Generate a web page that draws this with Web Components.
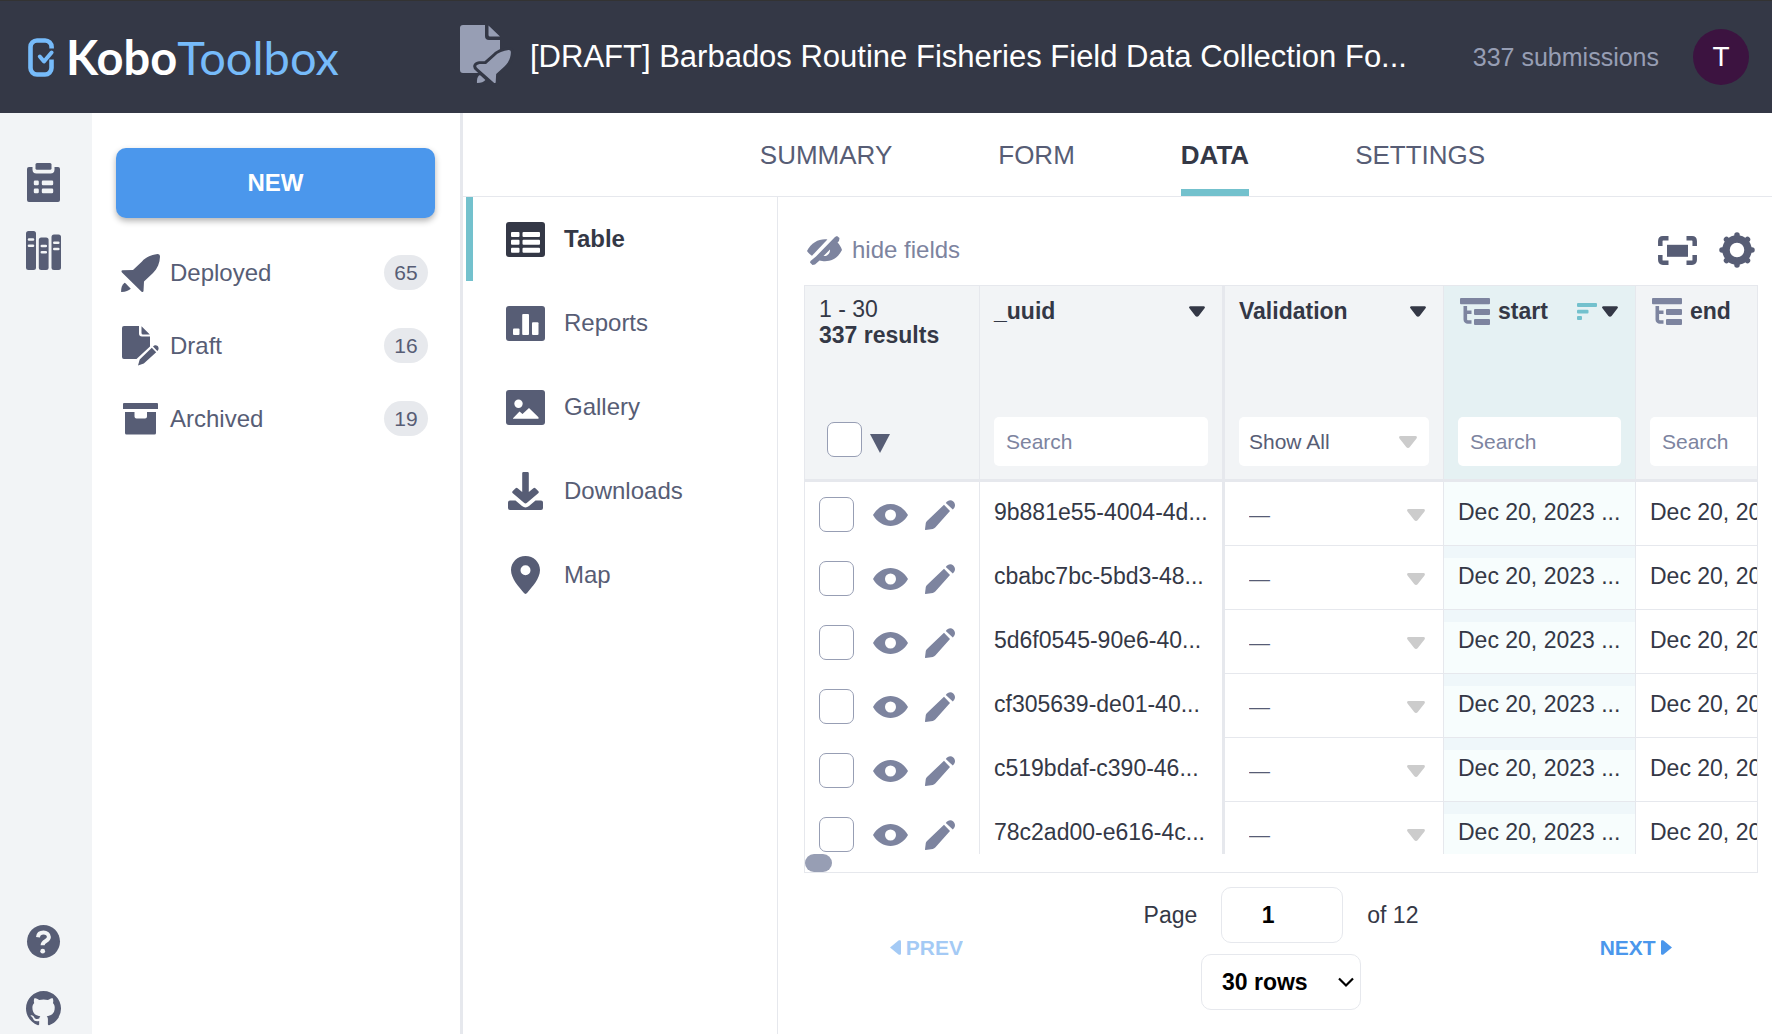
<!DOCTYPE html>
<html lang="en">
<head>
<meta charset="utf-8">
<title>KoboToolbox</title>
<style>
  :root {
    --ink: #343846; --text: #575d75; --mid: #7d849f; --soft: #979eb4;
    --line: #e6e8ed; --panel: #f2f4f6; --blue: #4b97ec; --teal: #73c1cd;
  }
  html, body { margin: 0; height: 100%; }
  body { font-family: "Liberation Sans", Arial, sans-serif; font-size: 24px; color: var(--text); background: #fff; overflow: hidden; }
</style>
</head>
<body>
<kobo-app></kobo-app>
<script>
const ICONS = {
  logo: [26, 39, '<g fill="none" stroke="currentColor" stroke-linecap="round"><path stroke-width="4.6" stroke-linecap="butt" d="M23.6 10.5V9a6.5 6.5 0 0 0-6.5-6.5H9A6.5 6.5 0 0 0 2.5 9v21A6.5 6.5 0 0 0 9 36.5h8a6.5 6.5 0 0 0 6.5-6.5v-8.5"/><path stroke-width="4" stroke-linejoin="round" d="M11.8 18.5l4.2 5 7.6-9"/></g>'],
  deployedDoc: [51, 64, '<path d="M3 0h22v11a4 4 0 0 0 4 4h11v33H3a3 3 0 0 1-3-3V3a3 3 0 0 1 3-3zM28.500 .5L40 11.500H30a1.500 1.500 0 0 1-1.500-1.500z"/><g transform="translate(15 25) scale(.92 .87)" stroke="#343846" stroke-width="6.500" paint-order="stroke" stroke-linejoin="round"><path d="M36.500.1C31 .6 25 3 21 7.500L12 16 5 16.200C1 17 .2 19 3 21.400L20.600 37.700C21.500 38.400 22.400 38 22.500 37L23 27.500 32 19C36.500 14.500 38.800 9 39 2.800 39 1 38 0 36.500.1Z"/><path d="M4.500 29C2.500 31 2 33.500 2.100 37.900 6.500 38 9.500 36.800 11.300 34.600L6 29.200Z"/></g>'],
  rocket: [39, 38, '<path d="M36.500.1C31 .6 25 3 21 7.500L12 16 1.500 16.200C.3 16.400.2 17.600 1 18.400L20.600 37.700C21.500 38.400 22.400 38 22.500 37L23 27.500 32 19C36.500 14.500 38.800 9 39 2.800 39 1 38 0 36.500.1Z"/><path d="M3.500 28.800C1 31 0 33.500.1 37.900 4.500 38 7.500 37 9.800 34.800L4.500 29.200Z"/>'],
  draft: [37, 41, '<path d="M2 1h15v7.500a3 3 0 0 0 3 3h8v10L14.500 34H2a2 2 0 0 1-2-2V3a2 2 0 0 1 2-2zM19.500 1.200L27.800 9.500H21A1.500 1.500 0 0 1 19.500 8z"/><path d="M29.800 22.800l4.400 4.400-12.400 11.300-5.800 2 1.700-6zM31 21.600c2-2.200 4.600-1.200 5.300.4.700 1.600.2 3-1 4z"/>'],
  archive: [35, 32, '<path d="M1 0h33a1 1 0 0 1 1 1v5H0V1a1 1 0 0 1 1-1zM2 9h9.500v4.500a2 2 0 0 0 2 2h8.500a2 2 0 0 0 2-2V9h9v21a1.500 1.500 0 0 1-1.500 1.500h-28A1.500 1.500 0 0 1 2 30z"/>'],
  clipboard: [33, 39, '<path fill-rule="evenodd" d="M2 4h3.500v2.500A4 4 0 0 0 9.500 10.500h14a4 4 0 0 0 4-4V4H31a2 2 0 0 1 2 2v31a2 2 0 0 1-2 2H2a2 2 0 0 1-2-2V6a2 2 0 0 1 2-2zM8 17.500a1.200 1.200 0 0 0-1.200 1.200v2.300A1.200 1.200 0 0 0 8 22.200h2.600a1.200 1.200 0 0 0 1.200-1.200v-2.300a1.200 1.200 0 0 0-1.200-1.200zm8 0a1.200 1.200 0 0 0-1.200 1.200v2.300a1.200 1.200 0 0 0 1.200 1.200h9a1.200 1.200 0 0 0 1.200-1.200v-2.300a1.200 1.200 0 0 0-1.200-1.200zM8 25.600a1.200 1.200 0 0 0-1.200 1.200v2.300A1.200 1.200 0 0 0 8 30.300h2.600a1.200 1.200 0 0 0 1.200-1.200v-2.300a1.200 1.200 0 0 0-1.200-1.200zm8 0a1.200 1.200 0 0 0-1.200 1.200v2.300a1.200 1.200 0 0 0 1.200 1.200h9a1.200 1.200 0 0 0 1.200-1.200v-2.300a1.200 1.200 0 0 0-1.200-1.200z"/><rect x="8.500" y="0" width="16" height="6.800" rx="1.500"/>'],
  books: [35, 39, '<rect width="10" height="39" rx="2.500"/><rect x="12.800" y="6.500" width="9.800" height="32.500" rx="2.500"/><rect x="25.500" y="3.500" width="9.500" height="35.500" rx="2.500"/><g stroke="#f2f4f6" stroke-width="2.600" stroke-linecap="round"><path d="M3 8.500h4M3 14.800h4M15.800 15h4M15.800 21.200h4M28.300 11.800h4M28.300 18h4"/></g>'],
  help: [33, 33, '<circle cx="16.500" cy="16.500" r="16.500"/><path d="M11 12.200c.3-3 2.500-4.600 5.500-4.600s5.400 1.700 5.400 4.500c0 4.300-6.300 3.600-6.300 8.200" fill="none" stroke="#f2f4f6" stroke-width="4"/><circle cx="15.700" cy="26.200" r="2.400" fill="#f2f4f6"/>'],
  github: [35, 35, '<path transform="scale(2.190)" d="M8 0C3.580 0 0 3.580 0 8c0 3.540 2.290 6.530 5.470 7.590.4.070.55-.17.55-.38 0-.19-.01-.82-.01-1.490-2.010.37-2.530-.49-2.690-.94-.09-.23-.48-.94-.82-1.130-.28-.15-.68-.52-.01-.53.63-.01 1.080.58 1.230.82.72 1.210 1.870.87 2.330.66.070-.52.28-.87.51-1.070-1.780-.2-3.640-.89-3.640-3.950 0-.87.31-1.590.82-2.150-.08-.2-.36-1.020.08-2.120 0 0 .67-.21 2.200.82.64-.18 1.320-.27 2-.27s1.360.09 2 .27c1.530-1.040 2.200-.82 2.200-.82.44 1.100.16 1.920.08 2.120.51.56.82 1.270.82 2.150 0 3.070-1.870 3.750-3.650 3.950.29.25.54.73.54 1.480 0 1.070-.01 1.930-.01 2.200 0 .21.15.46.55.38A8.010 8.010 0 0 0 16 8c0-4.420-3.580-8-8-8z"/>'],
  table: [39, 35, '<rect width="39" height="35" rx="3"/><g fill="#fff"><rect x="5" y="10" width="8.500" height="5" rx="1"/><rect x="16.500" y="10" width="17.500" height="5" rx="1"/><rect x="5" y="17.800" width="8.500" height="5" rx="1"/><rect x="16.500" y="17.800" width="17.500" height="5" rx="1"/><rect x="5" y="25.800" width="8.500" height="5" rx="1"/><rect x="16.500" y="25.800" width="17.500" height="5" rx="1"/></g>'],
  reports: [39, 35, '<rect width="39" height="35" rx="3"/><g fill="#fff"><rect x="7" y="22.500" width="6.500" height="6.500" rx="1"/><rect x="16.200" y="8" width="6.800" height="21" rx="1"/><rect x="26" y="16.200" width="6.500" height="12.800" rx="1"/></g>'],
  gallery: [39, 35, '<rect width="39" height="35" rx="3"/><g fill="#fff"><circle cx="12.500" cy="13.800" r="4.200"/><path d="M7 28.200l6.500-6.700 3 2.500 6.500-6 9.500 9.300v1.500H7z"/></g>'],
  download: [39, 38, '<path d="M16.200 1.500A1.200 1.200 0 0 1 17.400 0h4.200A1.200 1.200 0 0 1 22.800 1.500V20l4.600-3.800a1.500 1.500 0 0 1 2 0l2.800 2.800c.8.800.8 1.500 0 2.300L21 30.800a2.200 2.200 0 0 1-3 0L6.800 21.300c-.8-.8-.8-1.500 0-2.300l2.800-2.800a1.500 1.500 0 0 1 2 0L16.200 20z"/><path d="M4 28.500h5.500l6.500 5.500a5.500 5.500 0 0 0 7 0l6.500-5.500H35a2 2 0 0 1 2 2V36a2 2 0 0 1-2 2H4a2 2 0 0 1-2-2v-5.500a2 2 0 0 1 2-2z"/>'],
  map: [39, 38, '<path fill-rule="evenodd" d="M19.500 0C11.500 0 5 6.200 5 14c0 8.500 8 17 12.500 22.500 1.500 1.900 2.500 1.900 4 0C26 31 34 22.500 34 14 34 6.200 27.500 0 19.500 0zm0 9.200a5 5 0 1 1 0 10 5 5 0 0 1 0-10z"/>'],
  hide: [35, 29, '<path d="M0 15C4 7 11 3.200 18 3.200c.8 0 1.600 0 2.400.2L5 19.800C3 18.500 1.500 17 0 15z"/><path fill-rule="evenodd" d="M28 1l2-1 2.500 2-.5 3-1.500 1.500C32.500 8.500 34 11 35 14c-4 8-10 11.200-17 11.200-1.800 0-4-.3-5.500-.7L8 28.500 5.500 29 3 26.500 3.500 25l5.500-4.500zM23 13.500L16.500 20c4 .5 7-2.500 6.500-6.500z"/>'],
  fullscreen: [39, 29, '<path fill="none" stroke="currentColor" stroke-width="4.500" d="M10.500 2.300H5A2.800 2.800 0 0 0 2.300 5v5M28.500 2.300H34A2.800 2.800 0 0 1 36.700 5v5M10.500 26.700H5A2.800 2.800 0 0 1 2.300 24v-5M28.500 26.700H34a2.800 2.800 0 0 0 2.700-2.700v-5"/><rect x="9" y="8.800" width="21" height="12"/>'],
  gear: [36, 36, '<circle cx="18" cy="18" r="11" fill="none" stroke="currentColor" stroke-width="7.500"/><path stroke="currentColor" stroke-width="5.500" stroke-linecap="round" d="M18 4.500v-1.500M18 33v-1.500M4.500 18h-1.500M33 18h-1.500M8.200 8.200L7.500 7.500M28.500 28.500l-.7-.7M27.800 8.200l.7-.7M7.500 28.500l.7-.7"/>'],
  group: [30, 27, '<rect width="30" height="6.200" rx="1"/><rect x="14" y="11" width="16" height="6" rx="1"/><rect x="14" y="21" width="16" height="6" rx="1"/><path fill="none" stroke="currentColor" stroke-width="3.600" d="M5.300 8v13.500a2.500 2.500 0 0 0 2.500 2.500H11.500M5.300 14.200H11.500"/>'],
  sort: [20, 17, '<rect width="20" height="4" rx="1"/><rect y="6.800" width="11.500" height="3.800" rx="1"/><rect y="13" width="5" height="4" rx="1"/>'],
  caret: [18, 12, '<path d="M1.500 0h15c1.300 0 1.900 1.400 1 2.400L10.800 11c-1 1.200-2.600 1.200-3.600 0L.5 2.400C-.4 1.400.2 0 1.500 0z"/>'],
  triangle: [20, 19, '<path d="M0 0h20L10 19z"/>'],
  eye: [35, 22, '<path fill-rule="evenodd" d="M0 11C4.500 3.500 11 0 17.500 0S30.500 3.500 35 11C30.500 18.500 24 22 17.500 22S4.500 18.500 0 11zM17.500 5.500a5.500 5.500 0 1 0 0 11 5.500 5.500 0 0 0 0-11z"/>'],
  pencil: [30, 30, '<path d="M.8 23c.2-.8.6-1.500 1.200-2.100L19 4.800l6 6.200L10.500 27.300c-.8.900-1.600 1.400-2.700 1.600L.5 30C0 30-.1 29.700 0 29.200zM20.800 3.100c2-3 5.200-3.800 7.500-1.500 2.400 2.400 2.300 5.300-.5 8z"/>'],
  prev: [11, 15, '<path d="M0 7.500L8.500.4C10 0 11 .3 11 1.500v12c0 1.200-1 1.500-2.500 1.100z"/>'],
  next: [11, 15, '<path d="M11 7.500L2.500.4C1 0 0 .3 0 1.500v12c0 1.200 1 1.500 2.500 1.100z"/>'],
  chevron: [16, 10, '<path fill="none" stroke="currentColor" stroke-width="2.200" d="M1 1.500l7 7 7-7"/>']
};

const BASE = '*{box-sizing:border-box}a{color:inherit;text-decoration:none}button,input,select{font:inherit;color:inherit;margin:0}';

function define(name, css, html) {
  const template = document.createElement('template');
  template.innerHTML = `<style>${BASE}${css}</style>${typeof html === 'string' ? html : ''}`;
  customElements.define(name, class extends HTMLElement {
    connectedCallback() {
      if (this.shadowRoot) return;
      const root = this.attachShadow({ mode: 'open' });
      root.append(template.content.cloneNode(true));
      if (typeof html === 'function') {
        const part = document.createElement('template');
        part.innerHTML = html(this);
        root.append(part.content);
      }
    }
  });
}

define('kt-icon', ':host{display:inline-flex;flex:none}svg{display:block;fill:currentColor;overflow:visible}', el => {
  const [w, h, body] = ICONS[el.getAttribute('name')];
  const width = Number(el.getAttribute('width')) || w;
  return `<svg width="${width}" height="${Math.round(h * width / w)}" viewBox="0 0 ${w} ${h}" aria-hidden="true">${body}</svg>`;
});

define('kobo-header', `
  :host{display:flex;align-items:center;height:113px;padding:0 23px 0 28px;background:var(--ink);border-top:1px solid #333;color:#fff;box-sizing:border-box}
  .brand{display:flex;align-items:center;gap:12px;width:432px;flex:none;color:#76bbfa;font:400 47px/47px Lato,sans-serif}
  .brand b{font-weight:700;color:#fff}
  .doc{color:var(--soft);margin-right:19px}
  h1{flex:1;min-width:0;margin:0;font-size:31px;line-height:36px;font-weight:400;white-space:nowrap;overflow:hidden}
  .count{font-size:25px;line-height:30px;color:var(--soft);margin-right:34px;white-space:nowrap}
  button{width:56px;height:56px;border:0;border-radius:50%;background:#3c1340;color:#fff;font-size:28px;padding:0}`,
  `<a class="brand" href="#"><kt-icon name="logo"></kt-icon><span><b>Kobo</b>Toolbox</span></a>
   <kt-icon class="doc" name="deployedDoc"></kt-icon>
   <h1>[DRAFT] Barbados Routine Fisheries Field Data Collection Fo...</h1>
   <span class="count">337 submissions</span><button>T</button>`);

define('kobo-rail', `
  :host{display:flex;flex-direction:column;justify-content:space-between;width:92px;flex:none;padding:50px 5px 8px 0;background:var(--panel);box-sizing:border-box}
  nav{display:flex;flex-direction:column;align-items:center;gap:29px}
  nav+nav{gap:33px}a{display:flex}`,
  `<nav><a href="#" aria-label="Projects"><kt-icon name="clipboard"></kt-icon></a><a href="#" aria-label="Library"><kt-icon name="books"></kt-icon></a></nav>
   <nav><a href="#" aria-label="Help"><kt-icon name="help"></kt-icon></a><a href="#" aria-label="Source"><kt-icon name="github"></kt-icon></a></nav>`);

define('kobo-filter', `
  :host{display:block}
  a{display:flex;align-items:center;height:73px;padding:0 7px 0 4px;line-height:28px}
  .icon{display:flex;justify-content:center;width:41px;margin-right:9px}
  .label{flex:1}
  .badge{min-width:44px;height:35px;padding:0 10px;border-radius:18px;background:#e7e9ed;font-size:21px;line-height:35px;text-align:center}`,
  el => `<a href="#"><span class="icon"><kt-icon name="${el.getAttribute('icon')}"></kt-icon></span><span class="label"><slot></slot></span><span class="badge">${el.getAttribute('count')}</span></a>`);

define('kobo-sidebar', `
  :host{display:block;width:371px;flex:none;padding:35px 25px 0 24px;border-right:3px solid var(--line);box-sizing:border-box}
  button{display:block;width:100%;height:70px;margin-bottom:18px;border:0;border-radius:10px;background:var(--blue);color:#fff;font-weight:700;box-shadow:0 3px 6px rgba(0,0,0,.3)}`,
  `<button>NEW</button>
   <kobo-filter icon="rocket" count="65">Deployed</kobo-filter>
   <kobo-filter icon="draft" count="16">Draft</kobo-filter>
   <kobo-filter icon="archive" count="19">Archived</kobo-filter>`);

define('kobo-tabs', `
  :host{display:flex;justify-content:center;gap:106px;padding-left:10px;border-bottom:1px solid var(--line);font-size:26px;line-height:30px}
  a{padding:27px 0 19px;border-bottom:7px solid transparent}
  .on{font-weight:700;color:var(--ink);border-color:var(--teal)}`,
  `<a href="#">SUMMARY</a><a href="#">FORM</a><a href="#" class="on">DATA</a><a href="#">SETTINGS</a>`);

define('kobo-view-link', `
  :host{display:block}
  a{display:flex;align-items:center;gap:19px;height:84px;padding-left:33px;border-left:7px solid transparent}
  :host([active]) a{border-color:var(--teal);color:var(--ink);font-weight:700}`,
  el => `<a href="#"><kt-icon name="${el.getAttribute('icon')}"></kt-icon><slot></slot></a>`);

define('kobo-views', `:host{display:block;width:315px;flex:none;padding-left:3px;border-right:1px solid var(--line);box-sizing:border-box}`,
  `<kobo-view-link icon="table" active>Table</kobo-view-link>
   <kobo-view-link icon="reports">Reports</kobo-view-link>
   <kobo-view-link icon="gallery">Gallery</kobo-view-link>
   <kobo-view-link icon="download">Downloads</kobo-view-link>
   <kobo-view-link icon="map">Map</kobo-view-link>`);

define('kobo-toolbar', `
  :host{display:flex;align-items:center;height:88px;padding:18px 3px 0;box-sizing:border-box}
  button{display:flex;align-items:center;padding:0;border:0;background:none}
  .hide{gap:10px;margin-right:auto;color:var(--mid)}
  .full{margin-right:22px}`,
  `<button class="hide"><kt-icon name="hide"></kt-icon>hide fields</button>
   <button class="full" aria-label="Fullscreen"><kt-icon name="fullscreen"></kt-icon></button>
   <button aria-label="Table settings"><kt-icon name="gear"></kt-icon></button>`);

const heading = (label, icons = '', group = '') =>
  `<div class="name">${group}<button class="title">${label}</button><span class="tools">${icons}<kt-icon name="caret" width="16"></kt-icon></span></div>`;
const groupIcon = '<kt-icon class="group" name="group"></kt-icon>';
const search = label => `<input class="search" type="text" placeholder="Search" aria-label="Filter ${label}">`;
const uuids = ['9b881e55-4004-4d...', 'cbabc7bc-5bd3-48...', '5d6f0545-90e6-40...', 'cf305639-de01-40...', 'c519bdaf-c390-46...', '78c2ad00-e616-4c...'];

define('kobo-table', `
  :host{display:flex;flex-direction:column;flex:1;min-height:0;border:1px solid var(--line);color:var(--ink);font-size:23px;line-height:26px;box-sizing:border-box}
  .clip{flex:1;min-height:0;overflow:hidden}
  table{table-layout:fixed;width:1023px;border-collapse:separate;border-spacing:0}
  .c1{width:175px}.c2{width:245px}.c3{width:219px}.c4,.c5{width:192px}
  th,td{padding:0 14px;text-align:left;vertical-align:top;border-right:1px solid var(--line);white-space:nowrap;overflow:hidden}
  th{height:196px;background:var(--panel);border-bottom:3px solid var(--line)}
  th:nth-child(2),td:nth-child(2){border-right-width:3px}
  th:nth-child(4){background:#e5f1f3}
  td:nth-child(4){background:#f7fdfd}
  tr+tr td:nth-child(4){background:linear-gradient(#eff7fa 12px,#f7fdfd 12px)}
  .head{display:flex;flex-direction:column;justify-content:space-between;height:193px;padding:11px 0 13px}
  .first{padding:10px 0 22px}
  .range{font-weight:400}.range b{display:block}
  .name{display:flex;align-items:center;height:28px}
  .title{padding:0;border:0;background:none;font-weight:700;line-height:26px}
  .group{color:var(--mid);margin:0 8px 0 2px}
  .tools{display:flex;align-items:center;gap:5px;margin:0 3px 0 auto}
  .sort{color:var(--teal)}
  .all{display:flex;align-items:flex-end;gap:8px;padding-left:8px;color:var(--text)}
  .all button{display:flex;border:0;padding:0 0 4px;background:none}
  input[type=checkbox]{appearance:none;width:35px;height:35px;flex:none;border:1px solid var(--soft);border-radius:7px;background:#fff}
  .search,.pick select{width:100%;height:49px;border:0;border-radius:5px;background:#fff;font-size:21px;font-weight:400;outline:0}
  .search{padding:0 12px}.search::placeholder{color:var(--mid);opacity:1}
  .pick{display:grid;align-items:center;color:var(--text)}
  .pick>*{grid-area:1/1}
  .pick select{appearance:none;padding:0 10px}
  .pick kt-icon{justify-self:end;margin-right:12px;color:#ccc;pointer-events:none}
  td{height:64px;padding-top:17px}
  td:nth-child(n+3){border-bottom:1px solid var(--line)}
  td.act{padding-top:15px}
  .row{display:flex;align-items:center;color:var(--mid)}
  .row button{display:flex;padding:0;border:0;background:none;color:inherit}
  .view{margin:0 17px 0 19px}
  td.status{padding-top:8px}
  td.status kt-icon{margin-right:4px}
  .track{height:18px;flex:none}
  .thumb{width:27px;height:18px;border-radius:9px;background:var(--soft)}`,
  () => `<div class="clip"><table><colgroup><col class="c1"><col class="c2"><col class="c3"><col class="c4"><col class="c5"></colgroup>
  <thead><tr>
   <th><div class="head first"><span class="range">1 - 30<b>337 results</b></span><span class="all"><input type="checkbox" aria-label="Select all"><button aria-label="Selection menu"><kt-icon name="triangle"></kt-icon></button></span></div></th>
   <th><div class="head">${heading('_uuid')}${search('_uuid')}</div></th>
   <th><div class="head">${heading('Validation')}<div class="pick"><select aria-label="Filter validation"><option>Show All</option></select><kt-icon name="caret"></kt-icon></div></div></th>
   <th><div class="head">${heading('start', '<kt-icon class="sort" name="sort"></kt-icon>', groupIcon)}${search('start')}</div></th>
   <th><div class="head">${heading('end', '', groupIcon)}${search('end')}</div></th>
  </tr></thead><tbody>
  ${uuids.map((id, i) => `<tr>
   <td class="act"><div class="row"><input type="checkbox" aria-label="Select row ${i + 1}"><button class="view" aria-label="Open"><kt-icon name="eye"></kt-icon></button><button aria-label="Edit"><kt-icon name="pencil"></kt-icon></button></div></td>
   <td>${id}</td>
   <td class="status"><div class="pick"><select aria-label="Validation status"><option>—</option></select><kt-icon name="caret"></kt-icon></div></td>
   <td>Dec 20, 2023 ...</td><td>Dec 20, 2023 ...</td></tr>`).join('')}
  </tbody></table></div><div class="track"><div class="thumb"></div></div>`);

define('kobo-pager', `
  :host{display:grid;grid-template-columns:10fr 19fr 10fr;align-items:center;padding:14px 0 24px;color:var(--ink);font-size:23px;line-height:26px}
  .mid{display:flex;flex-direction:column;align-items:center;gap:11px}
  .page{display:flex;align-items:center;gap:24px}
  input,select{height:56px;border:1px solid var(--line);border-radius:10px;background:#fff;color:#000;font-weight:700}
  input{width:122px;padding:0 28px 0 0;text-align:center}
  .size{display:grid;align-items:center;color:#000}
  .size>*{grid-area:1/1}
  .size kt-icon{justify-self:end;margin-right:7px;pointer-events:none}
  select{appearance:none;width:160px;padding:0 20px}
  .nav{display:flex;align-items:center;justify-self:center;gap:5px;padding:0 0 2px;border:0;background:none;color:var(--blue);font-size:21px;font-weight:700;line-height:24px}
  .prev{opacity:.5}`,
  `<button class="nav prev" disabled><kt-icon name="prev"></kt-icon>PREV</button>
   <div class="mid"><label class="page">Page <input type="text" inputmode="numeric" value="1"> of 12</label>
   <div class="size"><select aria-label="Rows per page"><option>30 rows</option></select><kt-icon name="chevron"></kt-icon></div></div>
   <button class="nav">NEXT<kt-icon name="next"></kt-icon></button>`);

define('kobo-app', `
  :host{display:flex;flex-direction:column;height:100vh}
  .body,.lower{display:flex;flex:1;min-height:0}
  main{display:flex;flex-direction:column;flex:1;min-width:0}
  section{display:flex;flex-direction:column;flex:1;min-width:0;padding:0 14px 0 26px}`,
  `<kobo-header></kobo-header>
   <div class="body"><kobo-rail></kobo-rail><kobo-sidebar></kobo-sidebar>
   <main><kobo-tabs></kobo-tabs><div class="lower"><kobo-views></kobo-views>
   <section><kobo-toolbar></kobo-toolbar><kobo-table></kobo-table><kobo-pager></kobo-pager></section></div></main></div>`);
</script>
</body>
</html>
